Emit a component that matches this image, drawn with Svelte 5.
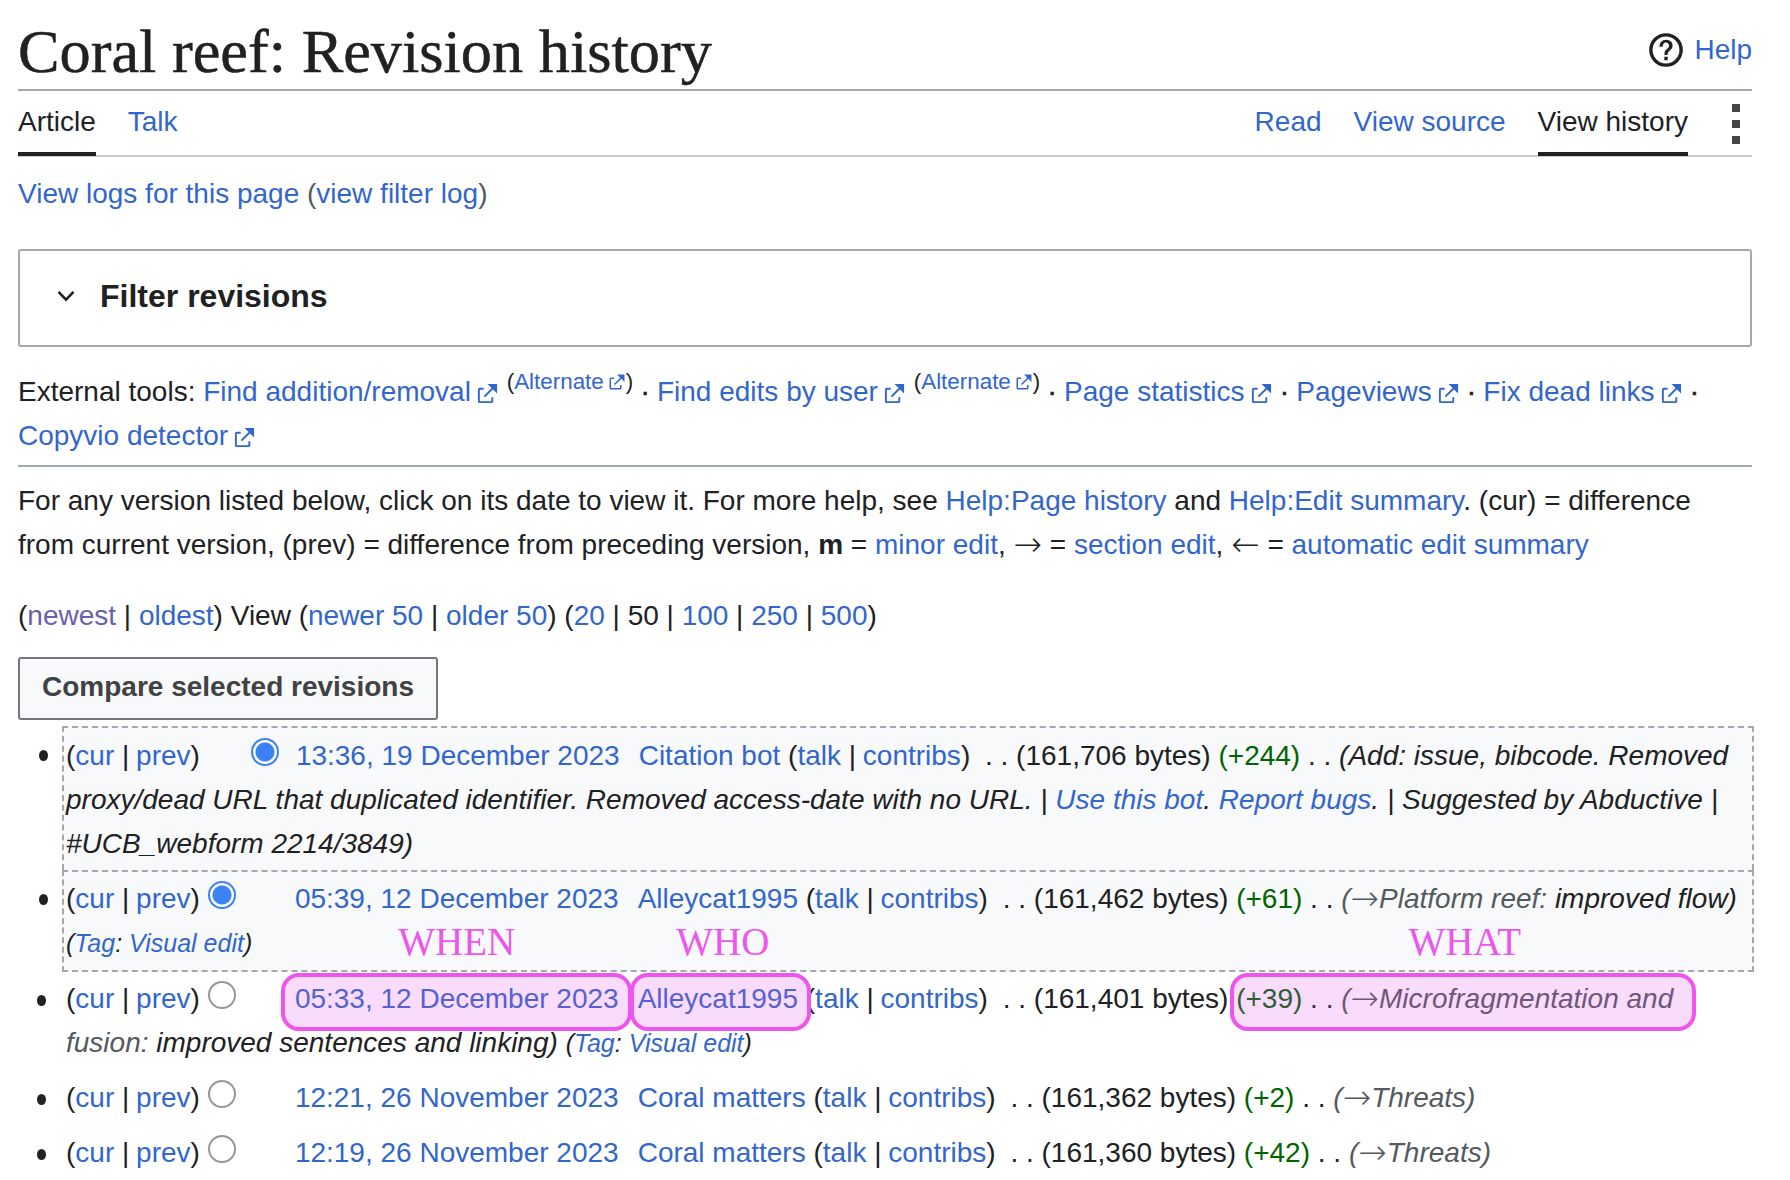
<script>
    const rows = [
        { date: "12:21, 26 November 2023", user: "Coral matters", bytes: "161,362", diff: "+2" },
        { date: "12:19, 26 November 2023", user: "Coral matters", bytes: "161,360", diff: "+42" },
    ];
    const extIcon = "M6 1h5v5L8.86 3.85 4.7 8 4 7.3l4.15-4.16zM2 3h2v1H2v6h6V8h1v2a1 1 0 0 1-1 1H2a1 1 0 0 1-1-1V4a1 1 0 0 1 1-1";
</script>

{#snippet ext()}<svg class="ext" viewBox="0 0 12 12"><path d={extIcon} /></svg>{/snippet}
{#snippet pipe()}<span class="pipe">|</span>{/snippet}
{#snippet curprev()}(<a href="#a">cur</a> {@render pipe()} <a href="#a">prev</a>){/snippet}
{#snippet usertools()}(<a href="#a">talk</a> {@render pipe()} <a href="#a">contribs</a>){/snippet}
{#snippet tag()}<em class="tag">(<a href="#a">Tag</a>: <a href="#a">Visual edit</a>)</em>{/snippet}

<div class="page">
    <header class="head">
        <h1>Coral reef: Revision history</h1>
        <div class="help">
            <svg viewBox="0 0 20 20">
                <circle cx="10" cy="10" r="8.9" />
                <path d="M11 16H9v-2h2zm2.71-7.6a2.6 2.6 0 0 1-.33.74 3.2 3.2 0 0 1-.48.55l-.54.48c-.21.18-.41.35-.58.52a2.5 2.5 0 0 0-.47.56A2.3 2.3 0 0 0 11 12a3.8 3.8 0 0 0-.11 1H9.08a8.9 8.9 0 0 1 .07-1.25 3.3 3.3 0 0 1 .25-.9 2.8 2.8 0 0 1 .41-.67 4 4 0 0 1 .58-.58c.17-.16.34-.3.51-.44a3 3 0 0 0 .43-.44 1.8 1.8 0 0 0 .3-.55 2 2 0 0 0 .11-.72 2.1 2.1 0 0 0-.17-.86 1.7 1.7 0 0 0-1-.9 1.7 1.7 0 0 0-.5-.1 1.77 1.77 0 0 0-1.53.68 3 3 0 0 0-.5 1.82H6.16a4.7 4.7 0 0 1 .28-1.68 3.6 3.6 0 0 1 .8-1.29 3.9 3.9 0 0 1 1.28-.83A4.6 4.6 0 0 1 10.18 4a4.4 4.4 0 0 1 1.44.23 3.5 3.5 0 0 1 1.15.65 3.1 3.1 0 0 1 .78 1.06 3.5 3.5 0 0 1 .29 1.45 3.4 3.4 0 0 1-.13 1.01" />
            </svg>
            <a href="#a">Help</a>
        </div>
    </header>

    <nav class="tabs">
        <div class="tabgroup">
            <span class="tab on">Article</span>
            <a class="tab" href="#a">Talk</a>
        </div>
        <div class="tabgroup">
            <a class="tab" href="#a">Read</a>
            <a class="tab" href="#a">View source</a>
            <span class="tab on">View history</span>
            <div class="dots"><i></i><i></i><i></i></div>
        </div>
    </nav>

    <p class="logs"><a href="#a">View logs for this page</a> <span class="grey">(</span><a href="#a">view filter log</a><span class="grey">)</span></p>

    <div class="filter">
        <svg viewBox="0 0 12 8"><path d="M1 1.2 6 6.4l5-5.2" /></svg>
        <strong>Filter revisions</strong>
    </div>

    <p class="tools">
        External tools: <a href="#a">Find addition/removal</a>{@render ext()} <sup>(<a href="#a">Alternate</a>{@render ext()})</sup> <span class="dot">·</span> <a href="#a">Find edits by user</a>{@render ext()} <sup>(<a href="#a">Alternate</a>{@render ext()})</sup> <span class="dot">·</span> <a href="#a">Page statistics</a>{@render ext()} <span class="dot">·</span> <a href="#a">Pageviews</a>{@render ext()} <span class="dot">·</span> <a href="#a">Fix dead links</a>{@render ext()} <span class="dot">·</span><br />
        <a href="#a">Copyvio detector</a>{@render ext()}
    </p>

    <p class="intro">
        For any version listed below, click on its date to view it. For more help, see <a href="#a">Help:Page history</a> and <a href="#a">Help:Edit summary</a>. (cur) = difference<br />
        from current version, (prev) = difference from preceding version, <b>m</b> = <a href="#a">minor edit</a>, <span class="arrow">→</span> = <a href="#a">section edit</a>, <span class="arrow">←</span> = <a href="#a">automatic edit summary</a>
    </p>

    <p class="pager">
        (<a class="visited" href="#a">newest</a> | <a href="#a">oldest</a>) View (<a href="#a">newer 50</a> | <a href="#a">older 50</a>) (<a href="#a">20</a> | 50 | <a href="#a">100</a> | <a href="#a">250</a> | <a href="#a">500</a>)
    </p>

    <button class="compare">Compare selected revisions</button>

    <ul class="revs">
        <li class="sel first">
            {@render curprev()}<input type="radio" class="radio top" checked /><a class="date" href="#a">13:36, 19 December 2023</a><a class="user" href="#a">Citation bot</a> {@render usertools()} <span class="sep">. .</span> (161,706 bytes) <span class="plus">(+244)</span> <span class="dd">. .</span> <em>(Add: issue, bibcode. Removed<br />
            proxy/dead URL that duplicated identifier. Removed access-date with no URL. | <a href="#a">Use this bot</a>. <a href="#a">Report bugs</a>. | Suggested by Abductive |<br />
            #UCB_webform 2214/3849)</em>
        </li>
        <li class="sel">
            {@render curprev()}<input type="radio" class="radio" checked /><a class="date" href="#a">05:39, 12 December 2023</a><a class="user" href="#a">Alleycat1995</a> {@render usertools()} <span class="sep">. .</span> (161,462 bytes) <span class="plus">(+61)</span> <span class="dd">. .</span> <em><span class="sec">(<span class="arrow">→</span>Platform reef:</span> improved flow)</em><br />
            {@render tag()}<span class="note when">WHEN</span><span class="note who">WHO</span><span class="note what">WHAT</span>
        </li>
        <li>
            {@render curprev()}<input type="radio" class="radio" /><a class="date hl hl-date" href="#a">05:33, 12 December 2023</a><a class="user hl hl-user" href="#a">Alleycat1995</a> {@render usertools()} <span class="sep">. .</span> (161,401 bytes) <span class="hl hl-what"><span class="plus">(+39)</span> <span class="dd">. .</span> <em class="sec">(<span class="arrow">→</span>Microfragmentation and</em></span><br />
            <em><span class="sec">fusion:</span> improved sentences and linking)</em> {@render tag()}
        </li>
        {#each rows as row}
            <li>
                {@render curprev()}<input type="radio" class="radio" /><a class="date" href="#a">{row.date}</a><a class="user" href="#a">{row.user}</a> {@render usertools()} <span class="sep">. .</span> ({row.bytes} bytes) <span class="plus">({row.diff})</span> <span class="dd">. .</span> <em class="sec">(<span class="arrow">→</span>Threats)</em>
            </li>
        {/each}
    </ul>
</div>

<style>
    :global(body) {
        margin: 0;
        background: #fff;
    }

    .page {
        box-sizing: border-box;
        width: 1790px;
        height: 1180px;
        overflow: hidden;
        padding: 0 38px 0 18px;
        font-family: "Liberation Sans", Arial, sans-serif;
        font-size: 28px;
        line-height: 44px;
        color: #202122;
    }

    a {
        color: #36c;
        text-decoration: none;
    }

    p {
        margin: 0;
    }

    .head {
        display: flex;
        justify-content: space-between;
        align-items: center;
        height: 89px;
        border-bottom: 2px solid #a2a9b1;
    }

    h1 {
        margin: 12px 0 0;
        font-family: "Liberation Serif", serif;
        font-size: 62.3px;
        font-weight: 400;
        line-height: 76px;
        -webkit-text-stroke: 0.5px #202122;
    }

    .help {
        display: flex;
        align-items: center;
        gap: 11px;
        margin-top: 10px;
    }

    .help svg {
        width: 34px;
        height: 34px;
    }

    .help circle {
        fill: none;
        stroke: #202122;
        stroke-width: 2;
    }

    .help path {
        fill: #202122;
    }

    .tabs {
        display: flex;
        justify-content: space-between;
        height: 64px;
        border-bottom: 2px solid #c8ccd1;
    }

    .tabgroup {
        display: flex;
        gap: 32px;
    }

    .tab {
        box-sizing: border-box;
        height: 65px;
        padding-top: 9px;
    }

    .tab.on {
        border-bottom: 4px solid #202122;
    }

    .dots {
        display: flex;
        flex-direction: column;
        gap: 8px;
        margin: 13px 12px 0 12px;
    }

    .dots i {
        width: 8px;
        height: 8px;
        background: #444;
    }

    .logs {
        margin-top: 15px;
    }

    .grey {
        color: #54595d;
    }

    .filter {
        box-sizing: border-box;
        display: flex;
        align-items: center;
        gap: 25px;
        height: 98px;
        margin-top: 33px;
        padding: 0 0 5px 37px;
        border: 2px solid #a2a9b1;
        border-radius: 3px;
    }

    .filter svg {
        width: 18px;
        height: 12px;
        fill: none;
        stroke: #202122;
        stroke-width: 1.7;
    }

    .filter strong {
        font-size: 32px;
    }

    .tools {
        margin-top: 23px;
        padding-bottom: 7px;
        border-bottom: 2px solid #a2a9b1;
    }

    .dot {
        margin: 0 -0.6px;
        -webkit-text-stroke: 0.6px #202122;
    }

    .ext {
        width: 23px;
        height: 23px;
        margin-left: 5px;
        vertical-align: -4px;
        fill: #36c;
    }

    sup {
        font-size: 22.4px;
        line-height: 0;
        vertical-align: 12px;
    }

    sup .ext {
        width: 18px;
        height: 18px;
        margin-left: 4px;
        vertical-align: -2px;
    }

    .intro {
        margin-top: 12px;
    }

    .pager {
        margin-top: 27px;
    }

    .visited {
        color: #6a60b0;
    }

    .pipe {
        letter-spacing: -1px;
    }

    .arrow {
        font-family: "DejaVu Sans", sans-serif;
        font-size: 34px;
        font-style: normal;
        font-weight: 200;
        line-height: 0;
        vertical-align: -2px;
    }

    .compare {
        display: block;
        box-sizing: border-box;
        width: 420px;
        height: 63px;
        margin-top: 19px;
        padding: 0 0 3px;
        background: #f8f9fa;
        border: 2px solid #72777d;
        border-radius: 3px;
        font: bold 28px "Liberation Sans", Arial, sans-serif;
        color: #404244;
    }

    .revs {
        margin: 6px 0 0;
        padding: 0 0 0 44px;
        list-style: none;
    }

    li {
        position: relative;
        margin-bottom: 11px;
        padding-left: 4px;
    }

    /* the bullet hangs outside the row box */
    li::before {
        content: "";
        position: absolute;
        left: -25px;
        top: 18px;
        width: 9px;
        height: 11px;
        border-radius: 50%;
        background: #202122;
    }

    .sel {
        margin-bottom: 0;
        box-sizing: border-box;
        margin-right: -2px;
        padding: 5px 0 5px 2px;
        background: #f8f9fa;
        border: 2px dashed #a2a9b1;
        border-bottom: 0;
    }

    .first {
        padding: 6px 0 4px 2px;
    }

    .sel::before {
        top: 22px;
    }

    .sel + .sel {
        border-bottom: 2px dashed #a2a9b1;
        margin-bottom: 5px;
    }

    .radio {
        appearance: none;
        box-sizing: border-box;
        width: 28px;
        height: 28px;
        margin: 0 59px 0 8px;
        vertical-align: -1px;
        border: 2px solid #97959f;
        border-radius: 50%;
        background: #fff;
    }

    .radio:checked {
        border-color: #3b82f6;
        background: radial-gradient(circle, #3b82f6 0 9px, #fff 10px);
    }

    .radio.top {
        margin: 0 17px 0 51px;
    }

    .date {
        margin-right: 19px;
    }

    .sep {
        margin-left: 7px;
    }

    .plus {
        color: #006400;
    }

    .sec {
        color: #54595d;
    }

    .tag {
        font-size: 25px;
    }

    .hl {
        position: relative;
    }

    /* highlighter box laid over the text, so the text shows through tinted */
    .hl::after {
        content: "";
        position: absolute;
        top: -10px;
        bottom: -17px;
        border: 4px solid #ee55ee;
        border-radius: 18px;
        background: rgba(225, 80, 240, 0.2);
    }

    .hl-date::after {
        left: -14px;
        right: -13px;
    }

    .hl-user::after {
        left: -8px;
        right: -13px;
    }

    .hl-what::after {
        left: -6px;
        right: -23px;
    }

    .note {
        font-family: "Liberation Serif", serif;
        font-size: 39px;
        line-height: 0;
        vertical-align: -3px;
        color: #ee55ee;
    }

    .when {
        margin-left: 146px;
    }

    .who {
        margin-left: 161px;
    }

    .what {
        margin-left: 639px;
    }
</style>
